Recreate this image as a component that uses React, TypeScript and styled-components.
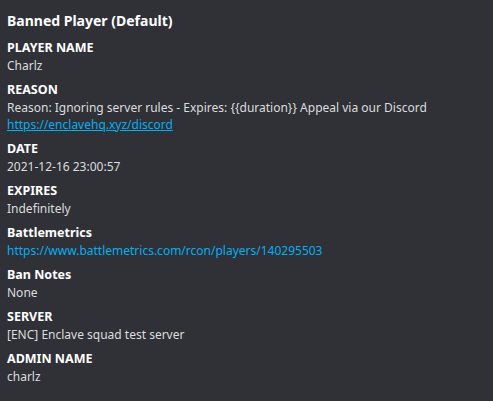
import React from "react";
import styled, { createGlobalStyle } from "styled-components";

const Global = createGlobalStyle`
  html, body { margin: 0; padding: 0; background: #2f3136; }
  body { font-family: "Noto Sans", "Open Sans", sans-serif; }
`;

const Embed = styled.div`
  box-sizing: border-box;
  width: 493px;
  height: 401px;
  background: #2f3136;
  padding: 12px 8px 0 7px;
  display: flex;
  flex-direction: column;
`;

const Title = styled.div`
  color: #ffffff;
  font-weight: 700;
  font-size: 14px;
  line-height: 18px;
  margin-bottom: 9px;
`;

const Field = styled.div`
  display: flex;
  flex-direction: column;
  margin-bottom: 7px;
`;

const Name = styled.div`
  color: #ffffff;
  font-weight: 700;
  font-size: 12.5px;
  line-height: 18px;
`;

const Value = styled.div`
  color: #dcddde;
  font-size: 12px;
  line-height: 17px;
`;

const Link = styled.a<{ $underline?: boolean }>`
  color: #00b0f4;
  text-decoration: ${(p) => (p.$underline ? "underline" : "none")};
`;

const fields: { name: string; value: React.ReactNode }[] = [
  { name: "PLAYER NAME", value: "Charlz" },
  {
    name: "REASON",
    value: (
      <>
        Reason: Ignoring server rules - Expires: {"{{duration}}"} Appeal via our Discord{" "}
        <Link $underline href="#">https://enclavehq.xyz/discord</Link>
      </>
    ),
  },
  { name: "DATE", value: "2021-12-16 23:00:57" },
  { name: "EXPIRES", value: "Indefinitely" },
  {
    name: "Battlemetrics",
    value: <Link href="#">https://www.battlemetrics.com/rcon/players/140295503</Link>,
  },
  { name: "Ban Notes", value: "None" },
  { name: "SERVER", value: "[ENC] Enclave squad test server" },
  { name: "ADMIN NAME", value: "charlz" },
];

export default function App() {
  return (
    <>
      <Global />
      <Embed>
        <Title>Banned Player (Default)</Title>
        {fields.map((f) => (
          <Field key={f.name}>
            <Name>{f.name}</Name>
            <Value>{f.value}</Value>
          </Field>
        ))}
      </Embed>
    </>
  );
}
